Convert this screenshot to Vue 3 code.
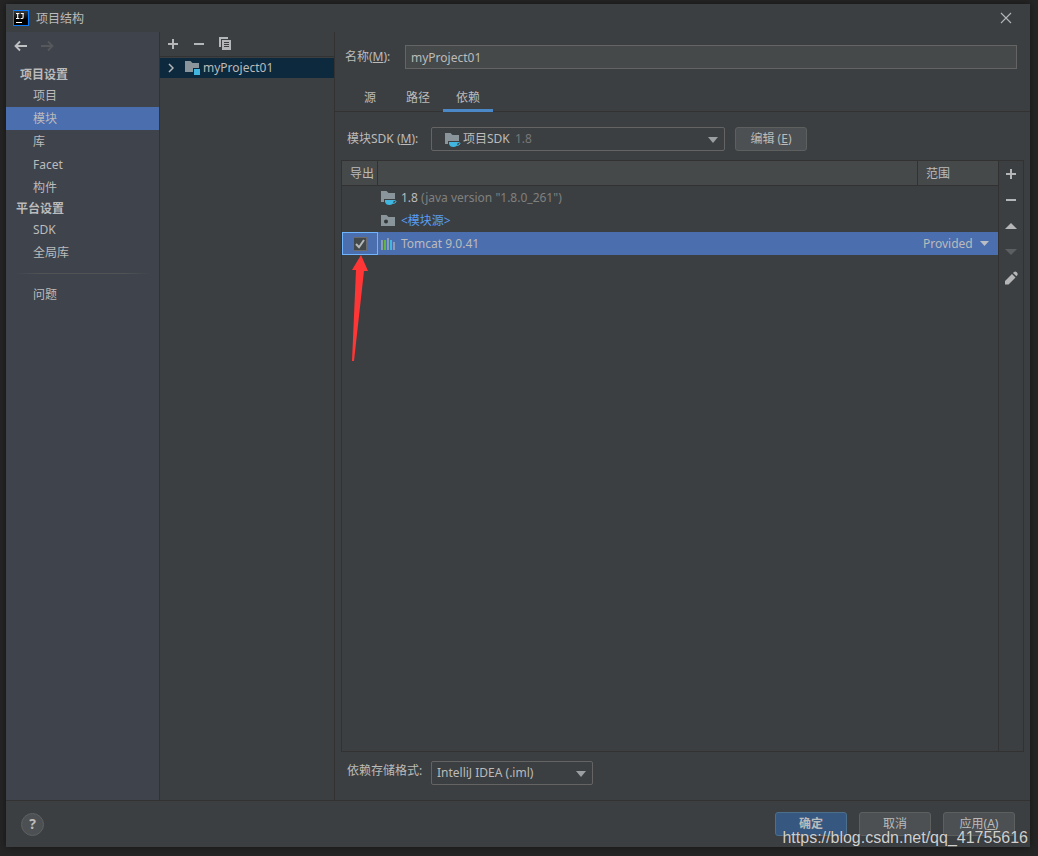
<script setup>
import { ref } from 'vue'

const projectItems = ['项目', '模块', '库', 'Facet', '构件']
const platformItems = ['SDK', '全局库']
const active = ref('模块')
const name = ref('myProject01')
const exported = ref(true)
const tabs = ['源', '路径', '依赖']
const activeTab = ref('依赖')
</script>

<template>
  <div class="desktop">
    <div class="dialog" role="dialog" aria-label="项目结构">
      <header class="titlebar">
        <svg class="logo" width="16" height="16" viewBox="0 0 16 16">
          <defs>
            <linearGradient id="logo-fill" x1="0" y1="0" x2="0" y2="1">
              <stop offset="0" stop-color="#3a3a3a" />
              <stop offset="0.6" stop-color="#000" />
            </linearGradient>
          </defs>
          <rect width="16" height="16" fill="#087cfa" />
          <rect x="1" y="1" width="14" height="14" fill="url(#logo-fill)" />
          <path d="M3 3.5H6.4M4.7 3.5V8.5M3 8.5H6.4M7.8 3.5H10.8M10.1 3.5V7.2Q10.1 8.5 9 8.5H7.6" fill="none" stroke="#fff" stroke-width="1.1" />
          <rect x="3" y="12" width="6" height="1" fill="#fff" />
        </svg>
        <h1>项目结构</h1>
        <button class="icon-btn close" aria-label="关闭">
          <svg width="12" height="12" viewBox="0 0 12 12"><path d="M1 1L11 11M11 1L1 11" stroke="#b4b6b8" stroke-width="1.1" /></svg>
        </button>
      </header>

      <div class="body">
        <nav class="sidebar">
          <div class="history">
            <button class="icon-btn" aria-label="后退">
              <svg width="14" height="12" viewBox="0 0 14 12"><path d="M13 6H1.5M6 1.5L1.5 6L6 10.5" fill="none" stroke="#bfc1c3" stroke-width="1.8" /></svg>
            </button>
            <button class="icon-btn" aria-label="前进" disabled>
              <svg width="14" height="12" viewBox="0 0 14 12"><path d="M0 6H11.5M7 1.5L11.5 6L7 10.5" fill="none" stroke="#56585c" stroke-width="1.8" /></svg>
            </button>
          </div>
          <h2 class="first">项目设置</h2>
          <button v-for="item in projectItems" :key="item" class="item" :class="{ selected: active === item }" @click="active = item">{{ item }}</button>
          <h2>平台设置</h2>
          <button v-for="item in platformItems" :key="item" class="item" :class="{ selected: active === item }" @click="active = item">{{ item }}</button>
          <hr />
          <button class="item" :class="{ selected: active === '问题' }" @click="active = '问题'">问题</button>
        </nav>

        <section class="modules">
          <div class="tree-tools">
            <button class="icon-btn" aria-label="添加"><svg width="12" height="12" viewBox="0 0 12 12"><path d="M6 1V11M1 6H11" stroke="#b4b6b8" stroke-width="2" /></svg></button>
            <button class="icon-btn" aria-label="移除"><svg width="12" height="12" viewBox="0 0 12 12"><path d="M1 6H11" stroke="#b4b6b8" stroke-width="2" /></svg></button>
            <button class="icon-btn" aria-label="复制">
              <svg width="12" height="14" viewBox="0 0 12 14"><path d="M0 0H9V2H2V10H0Z" fill="#b4b6b8" /><path d="M3 3H12V13H3Z" fill="#b4b6b8" /><path d="M5 5.5H10M5 7.5H10M5 9.5H10" stroke="#3c3f41" /></svg>
            </button>
          </div>
          <button class="tree-row">
            <svg class="chevron" width="6" height="10" viewBox="0 0 6 10"><path d="M1 1L5 5L1 9" fill="none" stroke="#b4b6b8" stroke-width="1.5" /></svg>
            <svg width="16" height="14" viewBox="0 0 16 14"><path d="M0 0H5.5L7.5 2H14V7H8V11H0Z" fill="#8a959b" /><rect x="9" y="8" width="6" height="6" fill="#40b6e0" /></svg>
            <span>myProject01</span>
          </button>
        </section>

        <main class="main">
          <div class="name-row">
            <label for="name">名称(<u>M</u>):</label>
            <input id="name" v-model="name" type="text" />
          </div>
          <div class="tabs" role="tablist">
            <button v-for="tab in tabs" :key="tab" role="tab" :aria-selected="activeTab === tab" :class="{ current: activeTab === tab }" @click="activeTab = tab">{{ tab }}</button>
          </div>

          <div class="content">
            <div class="sdk-row">
              <label for="sdk">模块SDK (<u>M</u>):</label>
              <div class="combo sdk">
                <select id="sdk"><option>项目SDK</option></select>
                <svg class="sdk-icon" width="16" height="14" viewBox="0 0 16 14"><path d="M0 0H5.5L7.5 2H14V8H3V11H0Z" fill="#8a959b" /><path d="M4 9H12.5V10.5Q12 14 8.5 14Q4.5 14 4 10.5Z" fill="#40b6e0" /><path d="M12 9.6H14Q15 9.8 15 10.8Q14.6 12.4 11.5 12.5" fill="none" stroke="#40b6e0" /></svg>
                <span class="version">1.8</span>
                <svg class="arrow" width="10" height="6" viewBox="0 0 10 6"><path d="M0 0H10L5 6Z" fill="#9c9fa1" /></svg>
              </div>
              <button class="btn">编辑 (<u>E</u>)</button>
            </div>

            <div class="deps">
              <div class="table-area">
                <table>
                  <thead>
                    <tr><th class="export">导出</th><th aria-label="依赖"></th><th class="scope">范围</th></tr>
                  </thead>
                  <tbody>
                    <tr>
                      <td></td>
                      <td>
                        <div class="cell">
                          <svg width="16" height="14" viewBox="0 0 16 14"><path d="M0 0H5.5L7.5 2H14V8H3V11H0Z" fill="#8a959b" /><path d="M4 9H12.5V10.5Q12 14 8.5 14Q4.5 14 4 10.5Z" fill="#40b6e0" /><path d="M12 9.6H14Q15 9.8 15 10.8Q14.6 12.4 11.5 12.5" fill="none" stroke="#40b6e0" /></svg>
                          <span>1.8 <span class="muted">(java version "1.8.0_261")</span></span>
                        </div>
                      </td>
                      <td></td>
                    </tr>
                    <tr>
                      <td></td>
                      <td>
                        <div class="cell">
                          <svg width="16" height="11" viewBox="0 0 16 11"><path d="M0 0H5.5L7.5 2H14V11H0Z" fill="#8a959b" /><circle cx="5" cy="6.5" r="2" fill="#33373a" /></svg>
                          <span class="source">&lt;模块源&gt;</span>
                        </div>
                      </td>
                      <td></td>
                    </tr>
                    <tr class="selected">
                      <td class="focus">
                        <label class="check">
                          <input v-model="exported" type="checkbox" aria-label="导出 Tomcat 9.0.41" />
                          <svg v-if="exported" width="14" height="14" viewBox="0 0 14 14"><path d="M3 7L6 10.2L11 3" fill="none" stroke="#b4b6b8" stroke-width="2" /></svg>
                        </label>
                      </td>
                      <td>
                        <div class="cell">
                          <svg width="16" height="12" viewBox="0 0 16 12"><path d="M0 2H2V12H0ZM6 0H8V12H6ZM12 4H14V12H12Z" fill="#8b9bb4" /><path d="M3 2H5V12H3Z" fill="#62b543" /><path d="M9 2H11V12H9Z" fill="#40b6e0" /></svg>
                          <span>Tomcat 9.0.41</span>
                        </div>
                      </td>
                      <td>
                        <div class="combo scope-combo">
                          <select aria-label="范围"><option>Provided</option></select>
                          <svg class="arrow" width="9" height="5" viewBox="0 0 9 5"><path d="M0 0H9L4.5 5Z" fill="#b9bdc4" /></svg>
                        </div>
                      </td>
                    </tr>
                  </tbody>
                </table>
              </div>
              <div class="side-tools">
                <button class="icon-btn" aria-label="添加依赖"><svg width="12" height="12" viewBox="0 0 12 12"><path d="M6 1V11M1 6H11" stroke="#b4b6b8" stroke-width="2" /></svg></button>
                <button class="icon-btn" aria-label="移除依赖"><svg width="12" height="12" viewBox="0 0 12 12"><path d="M1 6H11" stroke="#b4b6b8" stroke-width="2" /></svg></button>
                <button class="icon-btn" aria-label="上移"><svg width="12" height="6" viewBox="0 0 12 6"><path d="M0 6H12L6 0Z" fill="#b4b6b8" /></svg></button>
                <button class="icon-btn" aria-label="下移" disabled><svg width="12" height="6" viewBox="0 0 12 6"><path d="M0 0H12L6 6Z" fill="#5c5f61" /></svg></button>
                <button class="icon-btn" aria-label="编辑依赖"><svg width="14" height="14" viewBox="0 0 14 14"><path d="M1 13.5V10L8 3L11.5 6.5L4.5 13.5ZM9 2L10 1Q11.2 0 12.4 1L13.2 1.8Q14.2 3 13.3 4.2L12.4 5.2Z" fill="#b4b6b8" /></svg></button>
              </div>
              <svg class="pointer" width="16" height="106" viewBox="0 0 16 106"><path d="M9 0L16 16L12 16L2 106H0L4 15H0Z" fill="#ff3636" /></svg>
            </div>

            <div class="format-row">
              <label for="format">依赖存储格式:</label>
              <div class="combo format">
                <select id="format"><option>IntelliJ IDEA (.iml)</option></select>
                <svg class="arrow" width="10" height="6" viewBox="0 0 10 6"><path d="M0 0H10L5 6Z" fill="#9c9fa1" /></svg>
              </div>
            </div>
          </div>
        </main>
      </div>

      <footer class="footer">
        <button class="help" aria-label="帮助">?</button>
        <button class="btn primary">确定</button>
        <button class="btn">取消</button>
        <button class="btn">应用(<u>A</u>)</button>
      </footer>
    </div>
    <span class="watermark">https://blog.csdn.net/qq_41755616</span>
  </div>
</template>

<style>
body {
  background: #262626;
}
</style>

<style scoped>
* {
  box-sizing: border-box;
}
.desktop {
  position: relative;
  display: flex;
  min-height: 100vh;
  padding: 4px 8px 9px 6px;
  background: #262626;
  color: #bbbbbb;
  font: 12px/16px "Noto Sans", "Noto Sans CJK SC", sans-serif;
}
button,
input,
select {
  margin: 0;
  font: inherit;
  color: inherit;
}
h1,
h2 {
  margin: 0;
  font-size: 12px;
  line-height: 19px;
}
h1 {
  font-weight: 400;
}
.dialog {
  display: flex;
  flex: 1;
  flex-direction: column;
  min-width: 0;
  background: #3c3f41;
  box-shadow: 0 0 8px #151515;
}
.titlebar {
  display: flex;
  align-items: center;
  gap: 7px;
  height: 28px;
  padding: 0 18px 0 7px;
}
.icon-btn {
  display: flex;
  align-items: center;
  justify-content: center;
  padding: 0;
  border: 0;
  background: none;
}
.close {
  margin-left: auto;
}
.body {
  display: flex;
  flex: 1;
}
.sidebar {
  width: 154px;
  border-right: 1px solid #323232;
  background: #3f434c;
}
.history {
  display: flex;
  gap: 13px;
  height: 33px;
  padding: 0 8px 5px;
}
.sidebar h2 {
  padding-left: 10px;
}
.sidebar h2.first {
  padding-left: 14px;
}
.item {
  display: block;
  width: 100%;
  height: 23px;
  padding: 0 0 0 27px;
  border: 0;
  background: none;
  text-align: left;
}
.item.selected {
  background: #4b6eaf;
}
hr {
  height: 1px;
  margin: 9px 8px;
  border: 0;
  background: linear-gradient(90deg, transparent, #515355 20%, #515355 80%, transparent);
}
.modules {
  width: 175px;
  border-right: 1px solid #323232;
}
.tree-tools {
  display: flex;
  gap: 14px;
  height: 25px;
  padding-left: 7px;
  margin-bottom: 1px;
  border-bottom: 1px solid #323232;
}
.tree-row {
  display: flex;
  align-items: center;
  width: 100%;
  height: 20px;
  padding: 0 8px;
  border: 0;
  background: #0d293e;
}
.chevron {
  margin-right: 11px;
}
.tree-row span {
  margin-left: 2px;
}
.main {
  display: flex;
  flex: 1;
  flex-direction: column;
  min-width: 0;
}
.name-row {
  display: flex;
  align-items: center;
  padding: 13px 13px 0 10px;
}
.name-row label {
  width: 60px;
}
.name-row input {
  flex: 1;
  min-width: 0;
  height: 24px;
  padding: 0 5px;
  border: 1px solid #646464;
  background: #45494a;
}
.tabs {
  display: flex;
  height: 43px;
  padding: 14px 0 0 16px;
  background: linear-gradient(#323232, #323232) bottom / 100% 1px no-repeat;
}
.tabs button {
  min-width: 42px;
  padding: 4px 13px 0;
  border: 0;
  border-bottom: 3px solid transparent;
  background: none;
  text-align: left;
}
.tabs button.current {
  border-bottom-color: #4a88c7;
}
.content {
  display: flex;
  flex: 1;
  flex-direction: column;
  padding: 15px 6px 15px;
}
.sdk-row,
.format-row {
  display: flex;
  align-items: center;
  padding-left: 6px;
}
.sdk-row label,
.format-row label {
  width: 84px;
}
.combo {
  position: relative;
}
.combo select {
  display: block;
  width: 100%;
  height: 24px;
  padding: 0 5px;
  border: 1px solid #646464;
  border-radius: 2px;
  background: #3c3f41;
  appearance: none;
}
.combo .arrow {
  position: absolute;
  top: 10px;
  right: 7px;
  pointer-events: none;
}
.combo.sdk {
  width: 294px;
  margin-right: 10px;
}
.combo.sdk select {
  padding-left: 31px;
}
.sdk-icon {
  position: absolute;
  top: 6px;
  left: 14px;
  pointer-events: none;
}
.version {
  position: absolute;
  top: 4px;
  left: 84px;
  color: #777777;
  pointer-events: none;
}
.combo.format {
  width: 162px;
}
.btn {
  width: 72px;
  height: 24px;
  padding: 0;
  border: 1px solid #5e6060;
  border-radius: 3px;
  background: #4c5052;
}
.deps {
  position: relative;
  display: flex;
  flex: 1;
  margin: 9px 0;
  border: 1px solid #323232;
}
.table-area {
  flex: 1;
}
table {
  width: 100%;
  border-collapse: separate;
  border-spacing: 0;
  table-layout: fixed;
}
th {
  height: 25px;
  padding: 1px 8px 0;
  border-bottom: 1px solid #323232;
  background: #45494a;
  font-weight: 400;
  text-align: left;
}
th:not(:last-child) {
  border-right: 1px solid #323232;
}
th.export {
  width: 36px;
  padding: 1px 0 0 8px;
  white-space: nowrap;
}
th.scope {
  width: 80px;
}
td {
  height: 23px;
  padding: 0;
}
.cell {
  display: flex;
  align-items: center;
  gap: 4px;
  padding-left: 3px;
}
.muted {
  color: #808080;
}
.source {
  color: #589df6;
}
tr.selected {
  background: #4b6eaf;
}
.focus {
  box-shadow: inset 0 0 0 1px #6fb4ff;
}
.check {
  position: relative;
  display: block;
  width: 14px;
  height: 14px;
  margin: 0 auto;
}
.check input {
  display: block;
  width: 14px;
  height: 14px;
  border: 1px solid #6b6b6b;
  background: #43494a;
  appearance: none;
}
.check svg {
  position: absolute;
  inset: 0;
  pointer-events: none;
}
.scope-combo select {
  height: 23px;
  border: 0;
  background: none;
}
.scope-combo .arrow {
  top: 9px;
  right: 9px;
}
.side-tools {
  display: flex;
  flex-direction: column;
  width: 25px;
  border-left: 1px solid #323232;
}
.side-tools .icon-btn {
  height: 26px;
}
.pointer {
  position: absolute;
  top: 94px;
  left: 10px;
  pointer-events: none;
}
.format-row label {
  padding-bottom: 4px;
}
.footer {
  display: flex;
  align-items: center;
  gap: 12px;
  height: 47px;
  padding: 0 15px;
  border-top: 1px solid #323232;
}
.help {
  width: 23px;
  height: 23px;
  padding: 0;
  margin-right: auto;
  border: 1px solid #5e6060;
  border-radius: 50%;
  background: #4c5052;
  font-size: 14px;
  font-weight: 700;
}
.btn.primary {
  border-color: #4c708c;
  background: #365880;
  font-weight: 700;
}
.watermark {
  position: absolute;
  right: 10px;
  bottom: 8px;
  color: #d0d0d0;
  font: 16px/20px "Liberation Sans", Arial, sans-serif;
  text-shadow: 0 0 1px #333333;
  pointer-events: none;
}
</style>
